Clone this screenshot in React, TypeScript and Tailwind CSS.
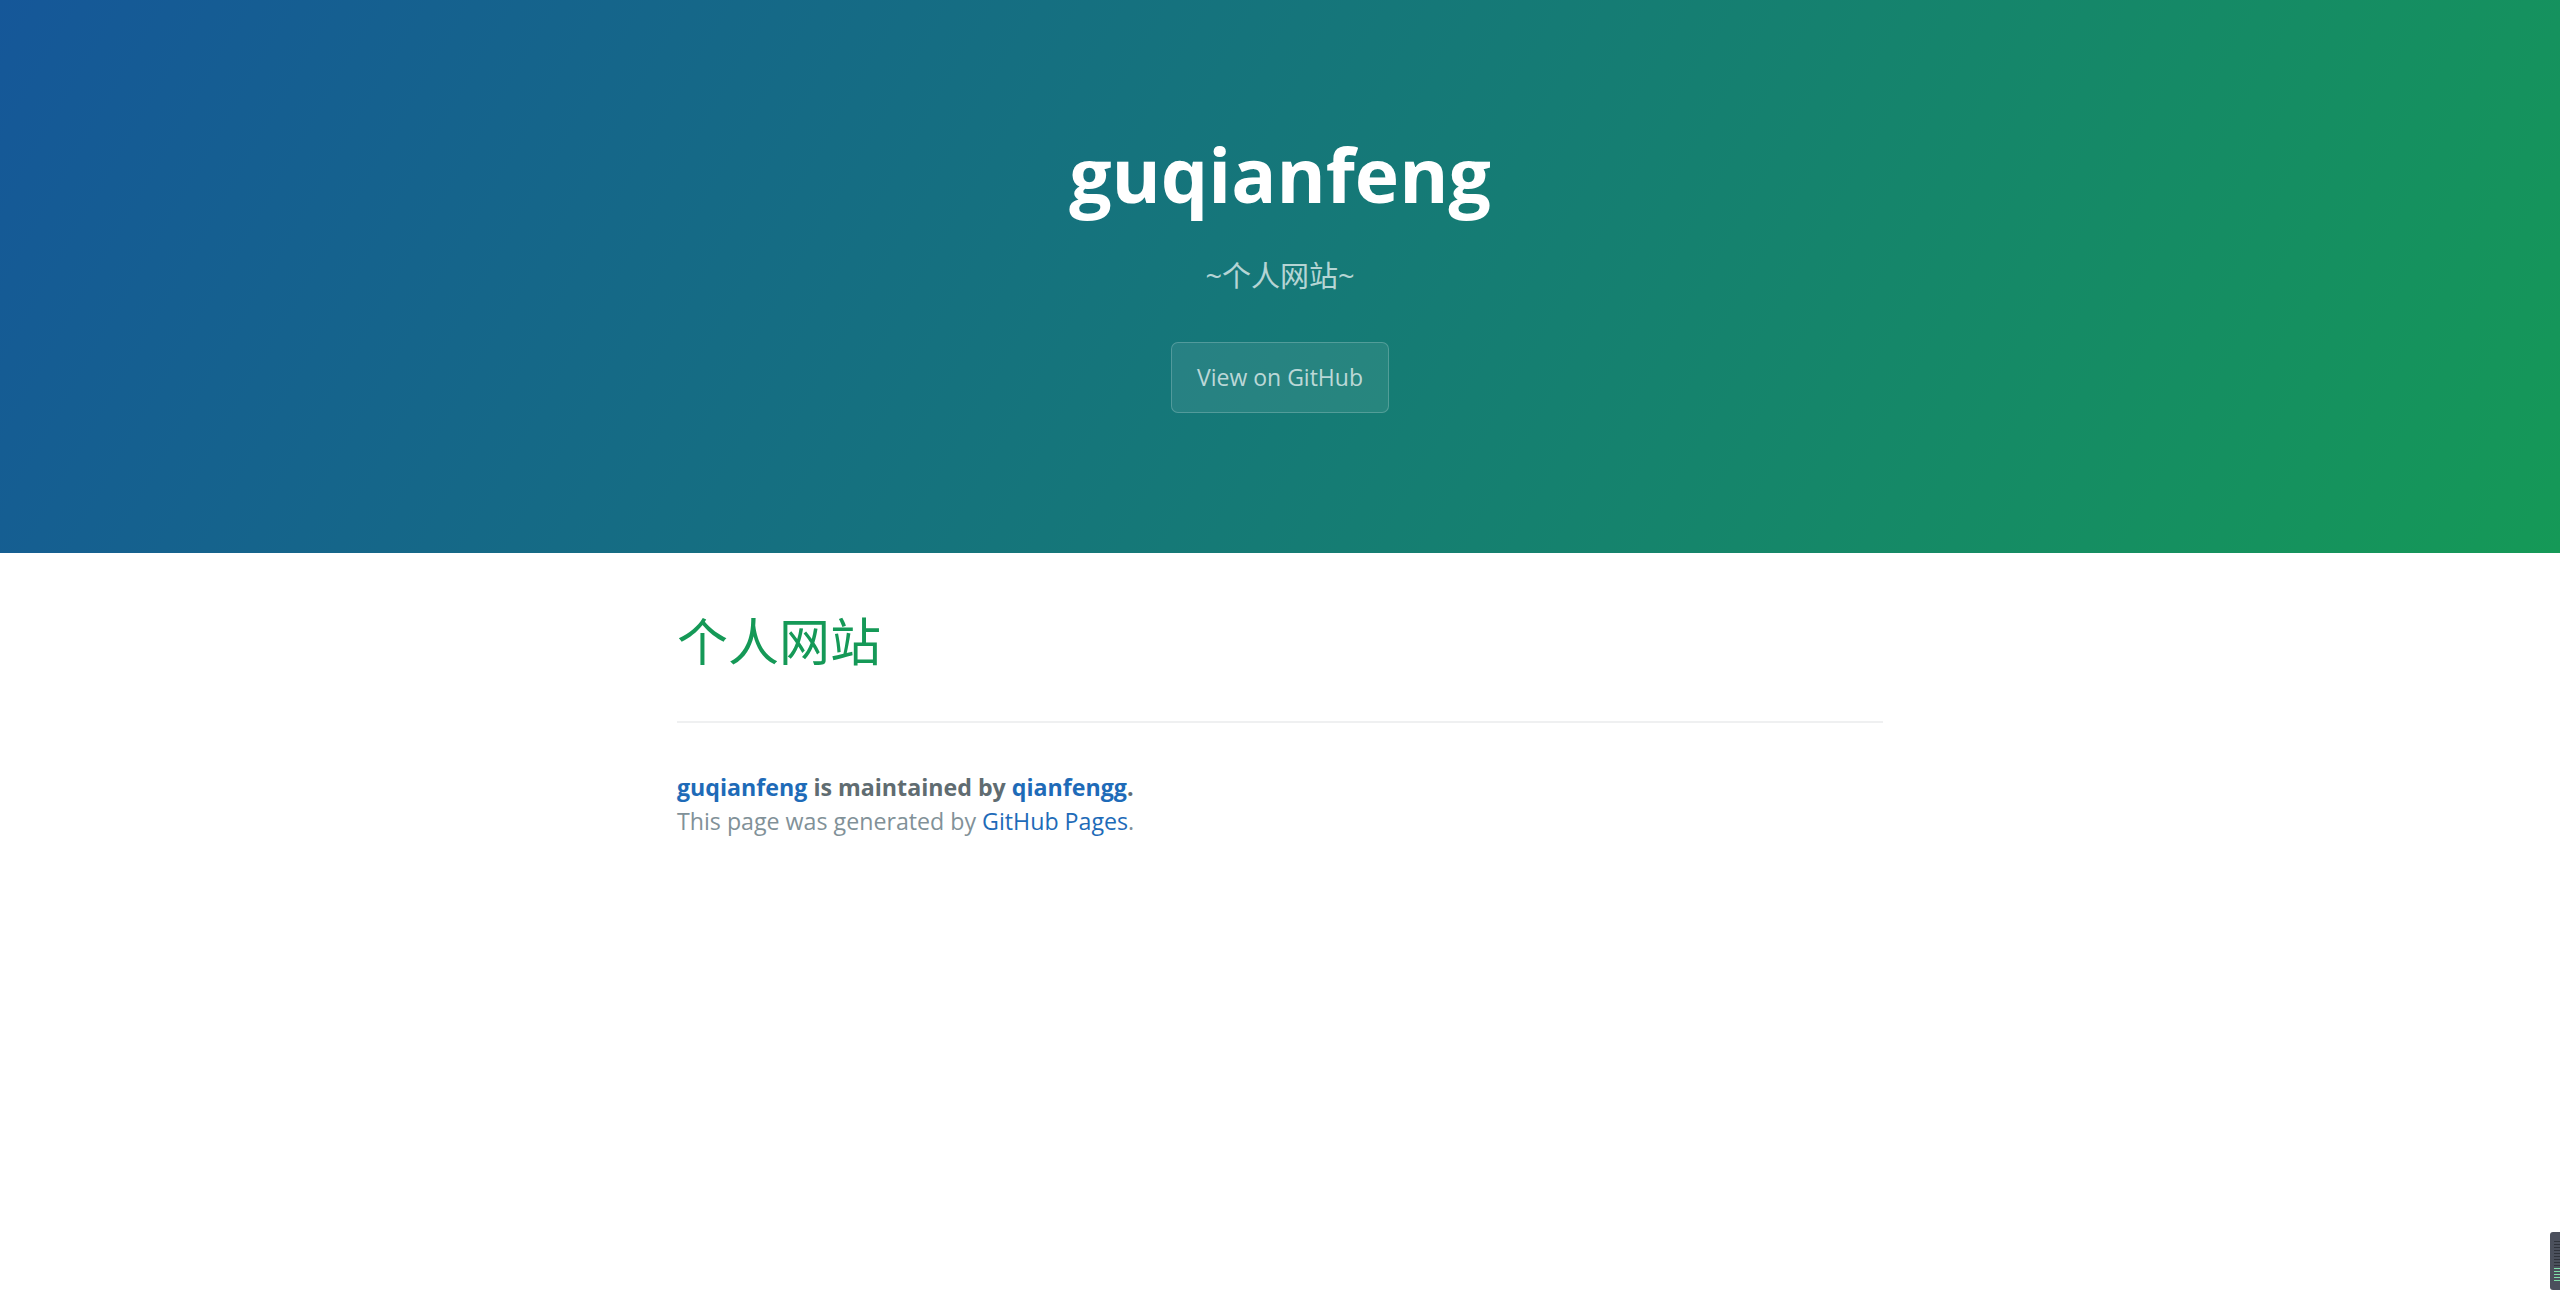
import React from "react";

export default function App() {
  const font = { fontFamily: '"Open Sans", "Noto Sans CJK SC", sans-serif' };
  return (
    <div className="min-h-[1297px] bg-white" style={font}>
      <header className="h-[553px] bg-[linear-gradient(120deg,#155799,#159957)] flex flex-col items-center pt-[118px] text-center">
        <h1 className="text-[75px] leading-[112px] font-bold text-white">guqianfeng</h1>
        <h2 className="mt-[24px] text-[29px] leading-[44px] font-normal text-white/70">~个人网站~</h2>
        <a
          href="#"
          className="mt-[44px] h-[71px] px-[25px] flex items-center text-[23px] text-white/70 bg-white/[0.08] border border-white/20 rounded-[7px]"
        >
          View on GitHub
        </a>
      </header>
      <main className="w-[1206px] mx-auto pt-[55px] text-[#606c71]">
        <h1 className="text-[51px] leading-[66px] font-normal text-[#159957]">个人网站</h1>
        <div className="mt-[47px] h-[2px] bg-[#eff0f1]" />
        <footer className="mt-[47px] text-[23.2px] leading-[34px]">
          <div className="font-bold">
            <a href="#" className="text-[#1e6bb8]">guqianfeng</a> is maintained by{" "}
            <a href="#" className="text-[#1e6bb8]">qianfengg</a>.
          </div>
          <div className="text-[#819198]">
            This page was generated by <a href="#" className="text-[#1e6bb8]">GitHub Pages</a>.
          </div>
        </footer>
      </main>
      <div className="fixed right-0 bottom-[7px] w-[10px] h-[58px] bg-[#4b505c] rounded-l-[3px] flex flex-col justify-center gap-[2px] pl-[4px] py-[4px]">
        {Array.from({ length: 14 }).map((_, i) => (
          <div key={i} className={i >= 9 ? "h-[1px] w-[6px] bg-[#7ee0a8]" : "h-[1px] w-[6px] bg-[#2f333b]"} />
        ))}
      </div>
    </div>
  );
}
